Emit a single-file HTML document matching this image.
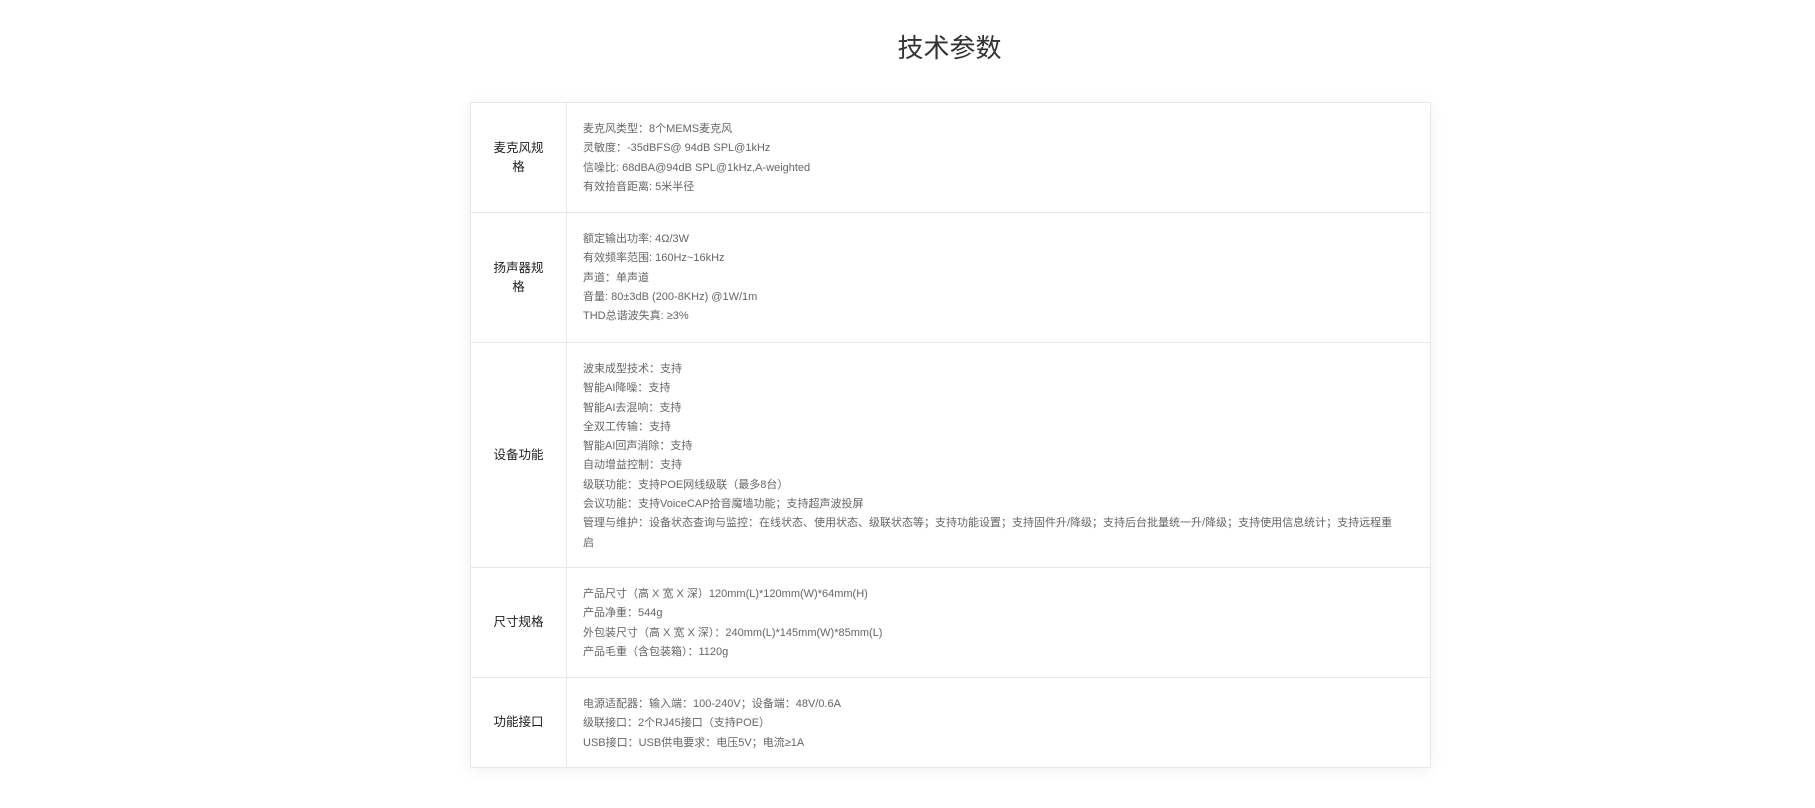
<!DOCTYPE html>
<html><head><meta charset="utf-8"><style>
html,body{margin:0;padding:0;background:#fff;width:1815px;height:808px;overflow:hidden}
body{font-family:"Liberation Sans","Noto Sans CJK SC",sans-serif}
h1{position:absolute;left:0;width:1899px;top:30px;margin:0;text-align:center;font-weight:normal;font-size:26px;color:#333;line-height:36px}
.tbl{position:absolute;left:470px;top:102px;width:959px;border:1px solid #e8e8e8;box-shadow:0 2px 14px rgba(0,0,0,0.06);background:#fff}
.row{display:flex;border-top:1px solid #e8e8e8}
.row:first-child{border-top:none}
.lab{width:95px;border-right:1px solid #e8e8e8;display:flex;align-items:center;justify-content:center;text-align:center;font-size:12.5px;color:#222;line-height:19px}
.val{flex:1;padding:17px 16px 15px 16px;font-size:11px;color:#666;line-height:19.3px;white-space:nowrap}
</style></head><body>
<h1>技术参数</h1>
<div class="tbl">
<div class="row" style="height:109px"><div class="lab">麦克风规<br>格</div><div class="val">麦克风类型：8个MEMS麦克风<br>灵敏度：-35dBFS@ 94dB SPL@1kHz<br>信噪比: 68dBA@94dB SPL@1kHz,A-weighted<br>有效拾音距离: 5米半径</div></div>
<div class="row" style="height:129px"><div class="lab">扬声器规<br>格</div><div class="val">额定输出功率: 4Ω/3W<br>有效频率范围: 160Hz~16kHz<br>声道：单声道<br>音量: 80±3dB (200-8KHz) @1W/1m<br>THD总谐波失真: ≥3%</div></div>
<div class="row" style="height:224px"><div class="lab">设备功能</div><div class="val">波束成型技术：支持<br>智能AI降噪：支持<br>智能AI去混响：支持<br>全双工传输：支持<br>智能AI回声消除：支持<br>自动增益控制：支持<br>级联功能：支持POE网线级联（最多8台）<br>会议功能：支持VoiceCAP拾音魔墙功能；支持超声波投屏<br>管理与维护：设备状态查询与监控：在线状态、使用状态、级联状态等；支持功能设置；支持固件升/降级；支持后台批量统一升/降级；支持使用信息统计；支持远程重<br>启</div></div>
<div class="row" style="height:109px"><div class="lab">尺寸规格</div><div class="val">产品尺寸（高 X 宽 X 深）120mm(L)*120mm(W)*64mm(H)<br>产品净重：544g<br>外包装尺寸（高 X 宽 X 深）：240mm(L)*145mm(W)*85mm(L)<br>产品毛重（含包装箱）：1120g</div></div>
<div class="row" style="height:89px"><div class="lab">功能接口</div><div class="val">电源适配器：输入端：100-240V；设备端：48V/0.6A<br>级联接口：2个RJ45接口（支持POE）<br>USB接口：USB供电要求：电压5V；电流≥1A</div></div>
</div>
</body></html>
